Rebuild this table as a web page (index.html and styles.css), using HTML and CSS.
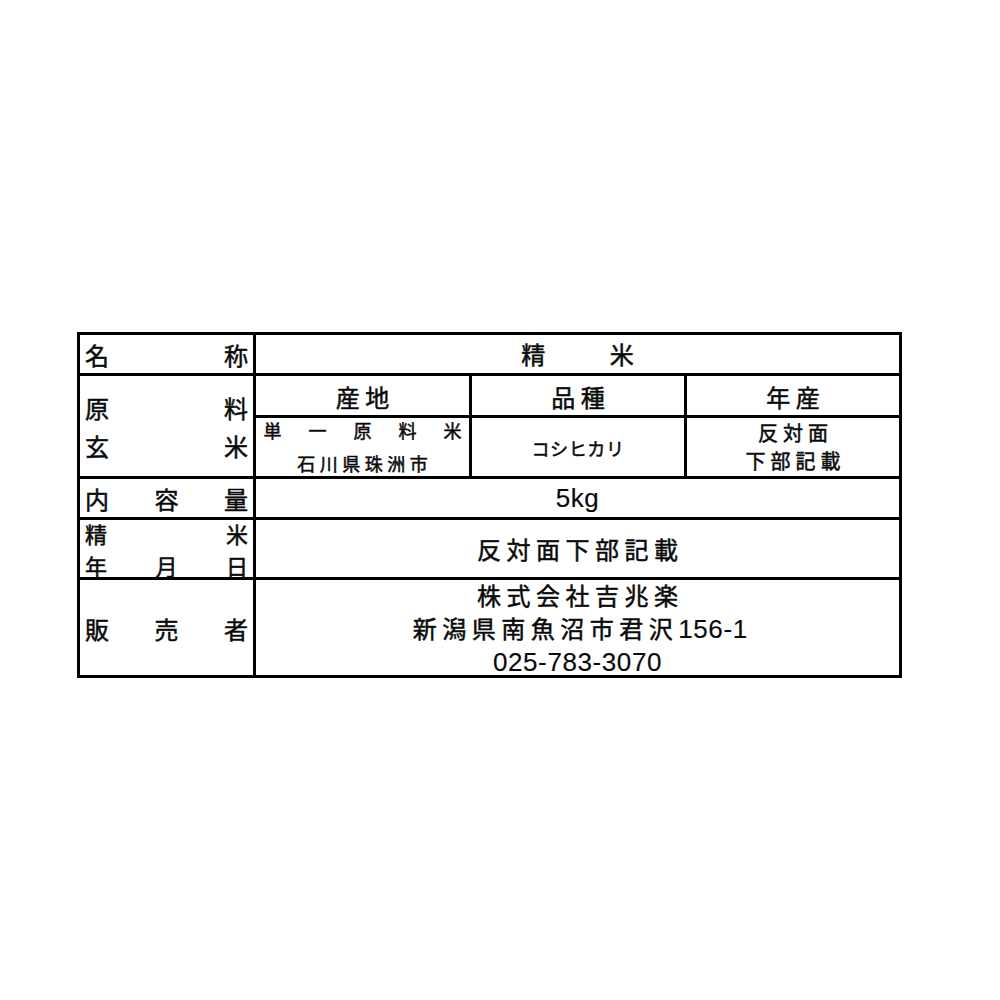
FILE: index.html
```html
<!DOCTYPE html>
<html lang="ja">
<head>
<meta charset="utf-8">
<title>精米 表示</title>
<link rel="stylesheet" href="styles.css">
</head>
<body>
<div class="page">
  <div class="sheet">
    <div class="cell label"><span>名</span><span>称</span></div>
    <div class="cell value wide"><span class="jp">精　　米</span></div>

    <div class="cell label stack raw">
      <div class="line"><span>原</span><span>料</span></div>
      <div class="line"><span>玄</span><span>米</span></div>
    </div>
    <div class="cell head"><span class="jp">産地</span></div>
    <div class="cell head"><span class="jp">品種</span></div>
    <div class="cell head"><span class="jp">年産</span></div>

    <div class="cell small origin">
      <span class="jp-s">単　一　原　料　米</span>
      <span class="jp-s">石川県珠洲市</span>
    </div>
    <div class="cell small"><span class="kana">コシヒカリ</span></div>
    <div class="cell small year">
      <span class="jp-m">反対面</span>
      <span class="jp-m">下部記載</span>
    </div>

    <div class="cell label"><span>内</span><span>容</span><span>量</span></div>
    <div class="cell value wide"><span class="num">5kg</span></div>

    <div class="cell label stack date">
      <div class="line"><span>精</span><span>米</span></div>
      <div class="line"><span>年</span><span>月</span><span>日</span></div>
    </div>
    <div class="cell value wide"><span class="jp">反対面下部記載</span></div>

    <div class="cell label"><span>販</span><span>売</span><span>者</span></div>
    <div class="cell value wide seller">
      <span class="jp">株式会社吉兆楽</span>
      <span><span class="jp">新潟県南魚沼市君沢</span><span class="num">156-1</span></span>
      <span class="num">025-783-3070</span>
    </div>
  </div>
</div>
</body>
</html>
```

FILE: styles.css
```css
html, body {
  margin: 0;
  background: #ffffff;
}

body {
  font-family: "Noto Sans CJK JP", "Liberation Sans", sans-serif;
  color: #0a0a0a;
  -webkit-text-stroke: 0.5px #0a0a0a;
}

.page {
  padding: 332px 0 0 77px;
}

.sheet {
  display: grid;
  width: max-content;
  grid-template-columns: 173px 213px 212px 212px;
  grid-template-rows: 38px 39px 58px 38px 57px 95px;
  gap: 3px;
  border: 3px solid #000;
  background: #000;
}

.cell {
  background: #ffffff;
  display: flex;
  align-items: center;
  justify-content: center;
  min-width: 0;
}

.wide {
  grid-column: span 3;
}

.raw {
  grid-row: span 2;
}

/* left label column */
.label {
  justify-content: space-between;
  padding: 2px 5px 0 5px;
  font-size: 24px;
  line-height: 24px;
}

.stack {
  flex-direction: column;
  align-items: stretch;
  justify-content: center;
}

.stack .line {
  display: flex;
  justify-content: space-between;
}

.raw .line {
  line-height: 38px;
}

.date {
  padding-top: 1px;
}

.date .line {
  font-size: 22px;
  line-height: 32px;
}

/* value text */
.value {
  font-size: 24px;
  line-height: 30px;
}

.jp {
  letter-spacing: 5.5px;
  padding-left: 5.5px;
}

.num {
  font-family: "Liberation Sans", sans-serif;
  font-size: 26px;
  letter-spacing: 0.6px;
  -webkit-text-stroke: 0.15px #0a0a0a;
}

.head {
  font-size: 24px;
  line-height: 30px;
  padding-top: 3px;
}

.seller {
  flex-direction: column;
  line-height: 33px;
  padding-top: 2px;
}

.small {
  flex-direction: column;
}

.jp-s {
  font-size: 18px;
  line-height: 33px;
  letter-spacing: 4.5px;
  padding-left: 4.5px;
}

.kana {
  font-size: 18px;
  letter-spacing: 0.6px;
  padding-top: 2px;
}

.jp-m {
  font-size: 20px;
  line-height: 28px;
  letter-spacing: 5px;
  padding-left: 5px;
}
```
